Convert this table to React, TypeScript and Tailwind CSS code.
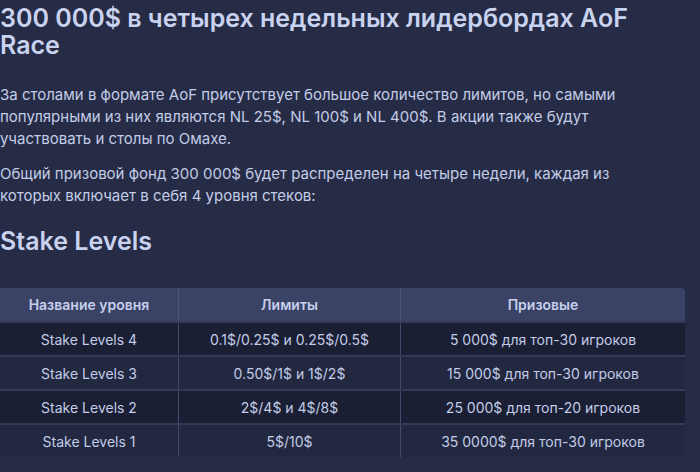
const rows = [
  { name: 'Stake Levels 4', limits: '0.1$/0.25$ и 0.25$/0.5$', prize: '5 000$ для топ-30 игроков' },
  { name: 'Stake Levels 3', limits: '0.50$/1$ и 1$/2$', prize: '15 000$ для топ-30 игроков' },
  { name: 'Stake Levels 2', limits: '2$/4$ и 4$/8$', prize: '25 000$ для топ-20 игроков' },
  { name: 'Stake Levels 1', limits: '5$/10$', prize: '35 0000$ для топ-30 игроков' },
];

export default function App() {
  return (
    <div className="w-[700px] h-[472px] overflow-hidden bg-[#262c45] text-[#c9d3f0]" style={{ fontFamily: 'Inter, "Noto Sans", sans-serif' }}>
      <h1 className="text-[25px] leading-[27px] font-semibold pt-[5px] pr-4">
        300 000$ в четырех недельных лидербордах AoF Race
      </h1>
      <p className="mt-[25px] w-[620px] text-[15px] leading-[22px] text-[#c3cce8]">
        За столами в формате AoF присутствует большое количество лимитов, но самыми популярными из них являются NL 25$, NL 100$ и NL 400$. В акции также будут участвовать и столы по Омахе.
      </p>
      <p className="mt-[13px] w-[620px] text-[15px] leading-[22px] text-[#c3cce8]">
        Общий призовой фонд 300 000$ будет распределен на четыре недели, каждая из которых включает в себя 4 уровня стеков:
      </p>
      <h2 className="mt-[19px] text-[25px] leading-[30px] font-semibold">Stake Levels</h2>
      <div className="mt-[32px] w-[685px] rounded-r-[4px] overflow-hidden text-[14px] text-[#c3cce8]">
        <div className="grid grid-cols-[179px_222px_1fr] h-[33px] bg-[#3a4266] font-semibold text-[#c6cfec]">
          <div className="flex items-center justify-center border-r border-[#4d5579]">Название уровня</div>
          <div className="flex items-center justify-center border-r border-[#4d5579]">Лимиты</div>
          <div className="flex items-center justify-center">Призовые</div>
        </div>
        {rows.map((r, i) => (
          <div key={r.name} className={`grid grid-cols-[179px_222px_1fr] h-[34px] border-t-2 border-[#343b58] ${i % 2 === 0 ? 'bg-[#1a1f33]' : 'bg-[#222840]'}`}>
            <div className="flex items-center justify-center border-r border-[#434b6c]">{r.name}</div>
            <div className="flex items-center justify-center border-r border-[#434b6c]">{r.limits}</div>
            <div className="flex items-center justify-center">{r.prize}</div>
          </div>
        ))}
      </div>
    </div>
  );
}
